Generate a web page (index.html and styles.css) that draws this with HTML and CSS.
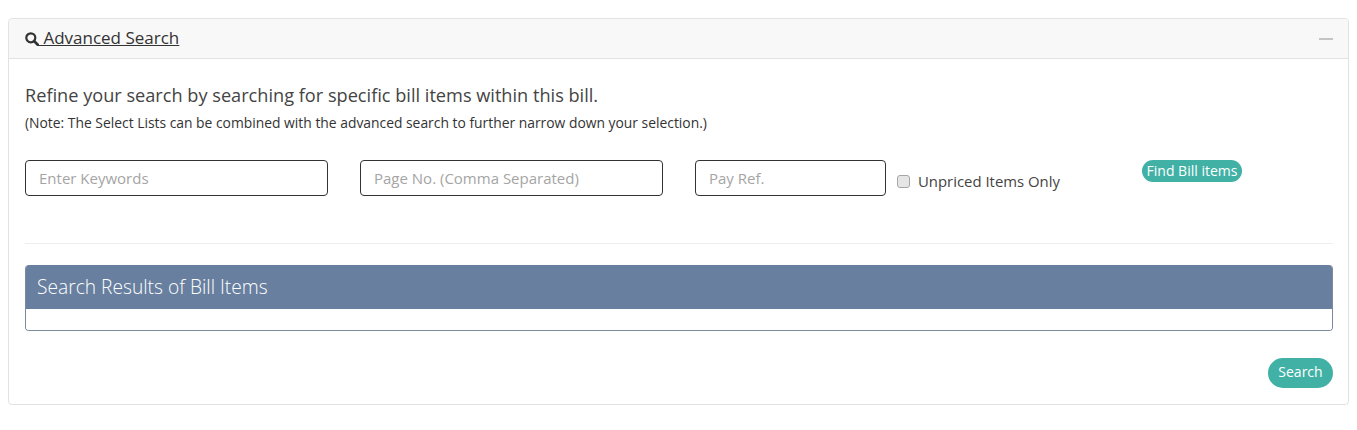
FILE: index.html
```html
<!DOCTYPE html>
<html lang="en">
<head>
<meta charset="utf-8">
<title>Advanced Search</title>
<link rel="stylesheet" href="styles.css">
</head>
<body>
<section class="card">
  <header class="card-head">
    <a class="card-title" href="#"><svg class="icon" viewBox="0 0 14 14" width="14" height="14"><circle cx="5.8" cy="5.8" r="4.5" fill="none" stroke="#333" stroke-width="2.2"/><path d="M9 9l4 4" stroke="#333" stroke-width="2.6" stroke-linecap="round"/></svg> Advanced Search</a>
    <span class="collapse"></span>
  </header>
  <div class="card-body">
    <p class="lead">Refine your search by searching for specific bill items within this bill.</p>
    <p class="note">(Note: The Select Lists can be combined with the advanced search to further narrow down your selection.)</p>
    <form class="filters">
      <input class="field field-wide" type="text" placeholder="Enter Keywords">
      <input class="field field-wide" type="text" placeholder="Page No. (Comma Separated)">
      <input class="field field-narrow" type="text" placeholder="Pay Ref.">
      <label class="check"><input type="checkbox"><span>Unpriced Items Only</span></label>
      <button class="btn btn-small" type="button">Find Bill items</button>
    </form>
    <hr class="rule">
    <div class="results">
      <h3 class="results-head">Search Results of Bill Items</h3>
      <div class="results-body"></div>
    </div>
    <div class="actions"><button class="btn btn-search" type="button">Search</button></div>
  </div>
</section>
</body>
</html>
```
FILE: styles.css
```css
* { box-sizing: border-box; }
body {
  margin: 18px 8px 0;
  background: #fff;
  font-family: "Open Sans", "Liberation Sans", sans-serif;
  color: #333;
}
.card {
  border: 1px solid #e2e2e2;
  border-radius: 4px;
  height: 387px;
}
.card-head {
  height: 40px;
  background: #f8f8f8;
  border-bottom: 1px solid #e2e2e2;
  border-radius: 4px 4px 0 0;
  padding: 0 15px 0 16px;
  display: flex;
  align-items: center;
  justify-content: space-between;
}
.card-title {
  font-size: 17px;
  color: #333;
  text-decoration: underline;
  white-space: pre;
  display: flex;
  align-items: center;
  margin-top: -2px;
}
.icon { margin-right: 0; margin-top: 3px; }
.collapse {
  width: 14px;
  height: 2px;
  background: #c4c4c4;
}
.card-body { padding: 24px 15px 0 16px; }
.lead {
  margin: 0;
  font-size: 18.16px;
  line-height: 24px;
  color: #444;
}
.note {
  margin: 6px 0 0;
  font-size: 13.87px;
  line-height: 20px;
  color: #333;
}
.filters {
  margin-top: 27px;
  display: flex;
  align-items: flex-start;
}
.field {
  height: 36px;
  border: 1px solid #333;
  border-radius: 4px;
  padding: 0 13px;
  font: 15px "Open Sans", sans-serif;
  color: #333;
  background: #fff;
}
.field::placeholder { color: #a5a5a5; opacity: 1; }
.field-wide { width: 303px; margin-right: 32px; }
.field-narrow { width: 191px; }
.check {
  display: flex;
  align-items: center;
  margin: 11px 0 0 11px;
  width: 245px;
  font-size: 14.9px;
  line-height: 20px;
  color: #444;
}
.check input {
  appearance: none;
  width: 13px;
  height: 13px;
  margin: 0 8px 0 0;
  background: #e6e6e6;
  border: 1px solid #a6a6a6;
  border-radius: 3px;
}
.btn {
  border: 0;
  background: #41b1a6;
  color: #fff;
  font-family: "Open Sans", sans-serif;
  border-radius: 20px;
  padding: 0;
}
.btn-small { width: 100px; height: 22px; font-size: 14px; line-height: 22px; }
.rule {
  border: 0;
  border-top: 1px solid #eee;
  margin: 47px 0 0;
}
.results {
  margin-top: 21px;
  border: 1px solid #7d8a9c;
  border-top: 0;
  border-radius: 4px;
  overflow: hidden;
}
.results-head {
  margin: 0 -1px;
  height: 44px;
  background: #687f9f;
  color: #fff;
  font-size: 19.2px;
  font-weight: 300;
  line-height: 44px;
  padding-left: 12px;
}
.results-body { height: 21px; background: #fff; }
.actions { display: flex; justify-content: flex-end; margin-top: 27px; }
.btn-search { width: 65px; height: 30px; font-size: 14px; padding-bottom: 3px; }
```
